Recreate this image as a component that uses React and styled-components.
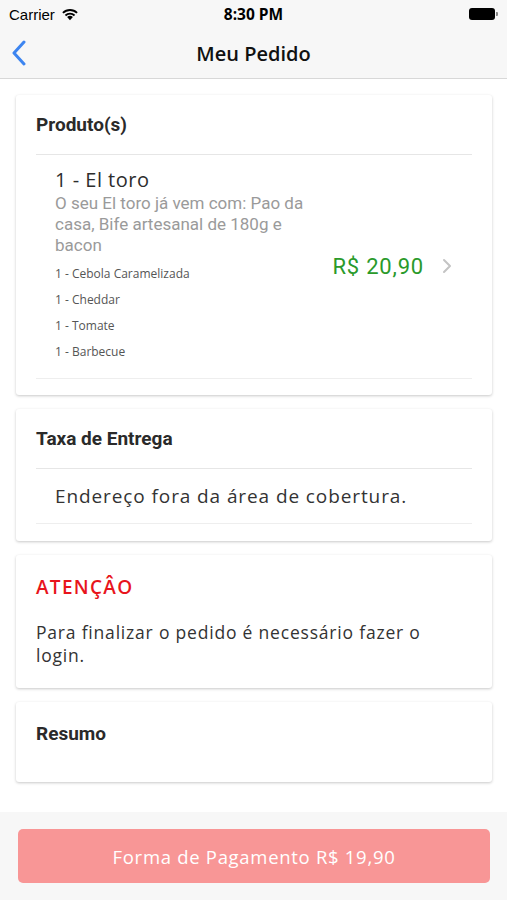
import styled, { createGlobalStyle } from "styled-components";

const Global = createGlobalStyle`
  html, body { margin: 0; padding: 0; background: #fff; }
  * { box-sizing: border-box; }
  body { font-family: Roboto, "Liberation Sans", sans-serif; }
`;

const Screen = styled.div`
  width: 507px;
  height: 900px;
  display: flex;
  flex-direction: column;
  background: #fff;
`;

const Top = styled.div`
  background: #f7f7f7;
  border-bottom: 1px solid #d8d8d8;
`;

const StatusBar = styled.div`
  height: 28px;
  display: grid;
  grid-template-columns: 1fr auto 1fr;
  align-items: center;
  padding: 0 9px;
  font-family: "Liberation Sans", sans-serif;
  font-size: 15px;
  color: #000;
`;

const Carrier = styled.div`
  display: flex;
  align-items: center;
  gap: 6px;
`;

const Time = styled.div`
  font-weight: 700;
  font-family: "Open Sans", sans-serif;
  font-size: 15.5px;
`;

const Battery = styled.div`
  justify-self: end;
  display: flex;
  align-items: center;
  gap: 1px;
  span:first-child {
    width: 26px;
    height: 12px;
    border-radius: 3px;
    background: #000;
  }
  span:last-child {
    width: 2px;
    height: 4px;
    background: #888;
    border-radius: 0 1px 1px 0;
  }
`;

const NavBar = styled.div`
  height: 50px;
  display: grid;
  grid-template-columns: 60px 1fr 60px;
  align-items: center;
`;

const Back = styled.div`
  padding-left: 11px;
  display: flex;
  align-items: center;
`;

const NavTitle = styled.div`
  text-align: center;
  font-family: "Open Sans", sans-serif;
  font-weight: 600;
  font-size: 20px;
  color: #111;
`;

const Content = styled.div`
  flex: 1;
  padding: 16px 15px 0 16px;
  display: flex;
  flex-direction: column;
  gap: 14px;
`;

const Card = styled.div`
  background: #fff;
  border-radius: 3px;
  box-shadow: 0 1px 3px rgba(0, 0, 0, 0.22);
  padding: 0 20px;
`;

const CardTitle = styled.div`
  height: ${(p) => p.$h || 60}px;
  display: flex;
  align-items: center;
  font-family: Roboto, sans-serif;
  font-weight: 700;
  font-size: 19px;
  color: #2a2a2a;
  border-bottom: ${(p) => (p.$line ? "1px solid #e6e6e6" : "none")};
`;

const Spacer = styled.div`
  height: ${(p) => p.$h || 17}px;
`;

const Alert = styled.div`
  padding-top: 19px;
  font-family: "Open Sans", sans-serif;
  font-weight: 600;
  font-size: 19px;
  letter-spacing: 1.3px;
  color: #e8141c;
`;

const Message = styled.div`
  padding: 21px 0 21px;
  max-width: 415px;
  font-family: "Open Sans", sans-serif;
  font-size: 17.5px;
  letter-spacing: 0.8px;
  line-height: 23px;
  color: #333;
`;

const Row = styled.div`
  display: flex;
  align-items: center;
  padding: 12px 0 13px 19px;
  border-bottom: 1px solid #eeeeee;
`;

const Info = styled.div`
  flex: 1;
`;

const Name = styled.div`
  font-family: "Open Sans", sans-serif;
  font-size: 20px;
  letter-spacing: 0.5px;
  line-height: 26px;
  color: #2d2d2d;
`;

const Desc = styled.div`
  font-family: Roboto, sans-serif;
  font-size: 17px;
  line-height: 21px;
  color: #9a9a9a;
  width: 262px;
`;

const Extras = styled.div`
  margin-top: 5px;
  display: flex;
  flex-direction: column;
`;

const Extra = styled.div`
  font-family: "Open Sans", sans-serif;
  font-size: 12px;
  line-height: 26px;
  color: #555;
`;

const Price = styled.div`
  font-family: Roboto, sans-serif;
  font-size: 22px;
  letter-spacing: 0.8px;
  color: #2a9a2a;
  margin-right: 18px;
`;

const Chevron = styled.svg`
  margin-right: 20px;
`;

const Plain = styled.div`
  padding: 0 0 0 19px;
  height: 55px;
  display: flex;
  align-items: center;
  font-family: "Open Sans", sans-serif;
  font-size: 19px;
  letter-spacing: 0.9px;
  color: #333;
  border-bottom: 1px solid #eeeeee;
`;

const Footer = styled.div`
  height: 88px;
  background: #f7f7f7;
  padding: 17px 17px 16px 18px;
`;

const PayButton = styled.button`
  width: 100%;
  height: 54px;
  border: none;
  border-radius: 5px;
  background: #f89696;
  color: #fff;
  font-family: "Open Sans", sans-serif;
  font-size: 18.5px;
  letter-spacing: 0.7px;
`;

export default function App() {
  return (
    <Screen>
      <Global />
      <Top>
        <StatusBar>
          <Carrier>
            Carrier
            <svg width="18" height="13" viewBox="0 0 17 12">
              <path d="M8.5 11.5 L5.8 8.4 A4 4 0 0 1 11.2 8.4 Z" fill="#000" />
              <path d="M3.6 6.3 A7 7 0 0 1 13.4 6.3 L12.2 7.6 A5.3 5.3 0 0 0 4.8 7.6 Z" fill="#000" />
              <path d="M1.2 3.8 A10.5 10.5 0 0 1 15.8 3.8 L14.6 5.1 A8.7 8.7 0 0 0 2.4 5.1 Z" fill="#000" />
            </svg>
          </Carrier>
          <Time>8:30 PM</Time>
          <Battery>
            <span />
            <span />
          </Battery>
        </StatusBar>
        <NavBar>
          <Back>
            <svg width="16" height="26" viewBox="0 0 16 26">
              <path d="M13 2 L3 13 L13 24" fill="none" stroke="#3d85f0" strokeWidth="3" strokeLinecap="round" strokeLinejoin="round" />
            </svg>
          </Back>
          <NavTitle>Meu Pedido</NavTitle>
          <div />
        </NavBar>
      </Top>
      <Content>
        <Card>
          <CardTitle $line>Produto(s)</CardTitle>
          <Row>
            <Info>
              <Name>1 - El toro</Name>
              <Desc>O seu El toro já vem com: Pao da casa, Bife artesanal de 180g e bacon</Desc>
              <Extras>
                <Extra>1 - Cebola Caramelizada</Extra>
                <Extra>1 - Cheddar</Extra>
                <Extra>1 - Tomate</Extra>
                <Extra>1 - Barbecue</Extra>
              </Extras>
            </Info>
            <Price>R$ 20,90</Price>
            <Chevron width="10" height="16" viewBox="0 0 10 16">
              <path d="M2 2 L8 8 L2 14" fill="none" stroke="#c4c4c4" strokeWidth="2" strokeLinecap="round" strokeLinejoin="round" />
            </Chevron>
          </Row>
          <Spacer $h={16} />
        </Card>
        <Card>
          <CardTitle $line>Taxa de Entrega</CardTitle>
          <Plain>Endereço fora da área de cobertura.</Plain>
          <Spacer />
        </Card>
        <Card>
          <Alert>ATENÇÂO</Alert>
          <Message>Para finalizar o pedido é necessário fazer o login.</Message>
        </Card>
        <Card>
          <CardTitle $h={63}>Resumo</CardTitle>
          <Spacer />
        </Card>
      </Content>
      <Footer>
        <PayButton>Forma de Pagamento R$ 19,90</PayButton>
      </Footer>
    </Screen>
  );
}
